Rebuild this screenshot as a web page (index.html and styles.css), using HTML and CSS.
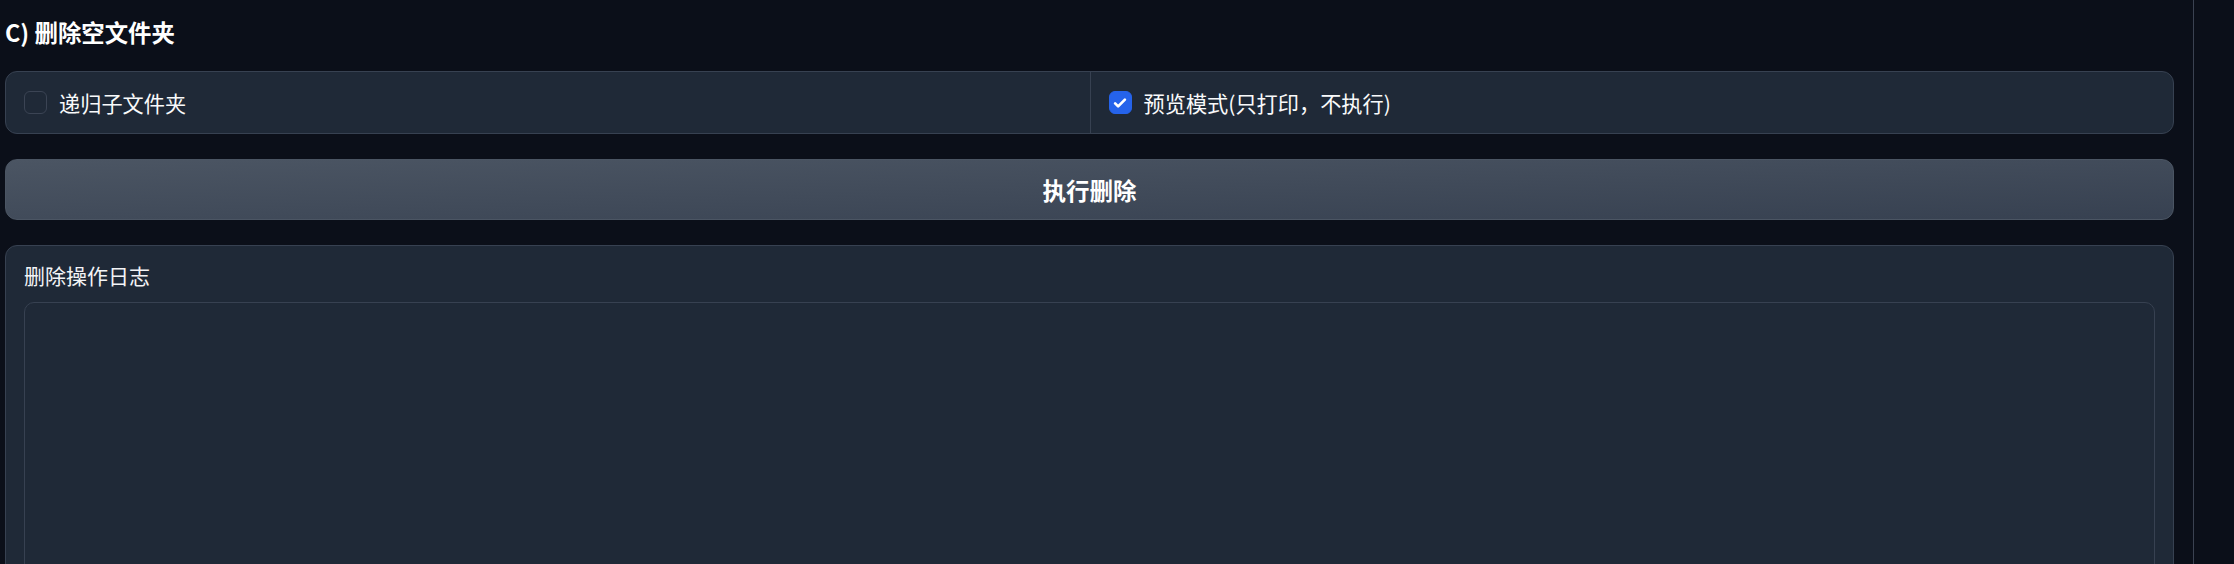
FILE: index.html
```html
<!DOCTYPE html>
<html lang="zh-CN">
<head>
<meta charset="utf-8">
<title>删除空文件夹</title>
<link rel="stylesheet" href="styles.css">
</head>
<body>
<div class="page">
  <main class="main">
    <h3 class="heading">C) 删除空文件夹</h3>
    <div class="panel options">
      <label class="option">
        <span class="box"></span>
        <span class="opt-label">递归子文件夹</span>
      </label>
      <label class="option divided">
        <span class="box checked">
          <svg viewBox="0 0 24 24" width="18" height="18"><path d="M5.5 12.5l4 4L18.5 7.5" fill="none" stroke="#fff" stroke-width="3.6" stroke-linecap="round" stroke-linejoin="round"/></svg>
        </span>
        <span class="opt-label">预览模式(只打印，不执行)</span>
      </label>
    </div>
    <button class="run-btn" type="button">执行删除</button>
    <div class="panel log">
      <div class="log-label">删除操作日志</div>
      <div class="log-area"></div>
    </div>
  </main>
  <aside class="side"></aside>
</div>
</body>
</html>
```
FILE: styles.css
```css
html, body {
  margin: 0;
  padding: 0;
  background: #0b0f19;
  overflow: hidden;
}
body {
  font-family: "Noto Sans CJK SC", "Noto Sans", sans-serif;
  color: #f3f4f6;
}
.page {
  display: flex;
  height: 564px;
  overflow: hidden;
}
.main {
  flex: 1;
  padding: 14px 19px 0 5px;
  display: flex;
  flex-direction: column;
  min-width: 0;
}
.main > * {
  flex-shrink: 0;
}
.side {
  width: 40px;
  border-left: 1px solid #3b4251;
  flex-shrink: 0;
}
.heading {
  margin: 0 0 21px 0;
  font-size: 23.4px;
  line-height: 36px;
  font-weight: 700;
  color: #ffffff;
}
.panel {
  background: #1f2937;
  border: 1px solid #374151;
  border-radius: 12px;
}
.options {
  display: grid;
  grid-template-columns: 1fr 1fr;
  height: 61px;
}
.option {
  display: flex;
  align-items: center;
  gap: 12px;
  padding: 0 18px;
}
.option.divided {
  border-left: 1px solid #374151;
}
.box {
  width: 21px;
  height: 21px;
  border: 1px solid #3b4454;
  border-radius: 6px;
  background: #1f2937;
  display: flex;
  align-items: center;
  justify-content: center;
  flex-shrink: 0;
}
.box.checked {
  background: #2563eb;
  border-color: #2563eb;
}
.opt-label {
  font-size: 21.2px;
  line-height: 28px;
  color: #f9fafb;
}
.run-btn {
  margin-top: 25px;
  height: 61px;
  border: 1px solid #4b5563;
  border-radius: 12px;
  background: linear-gradient(to bottom right, #4b5563, #374151);
  color: #ffffff;
  font-family: inherit;
  font-size: 23.5px;
  font-weight: 700;
  padding: 0;
}
.log {
  margin-top: 25px;
  padding: 15px 18px 0 18px;
  height: 400px;
  border-bottom-left-radius: 0;
  border-bottom-right-radius: 0;
}
.log-label {
  font-size: 21px;
  line-height: 28px;
  color: #f3f4f6;
}
.log-area {
  margin-top: 13px;
  height: 360px;
  border: 1px solid #374151;
  border-radius: 10px;
  background: #1f2937;
}
```
